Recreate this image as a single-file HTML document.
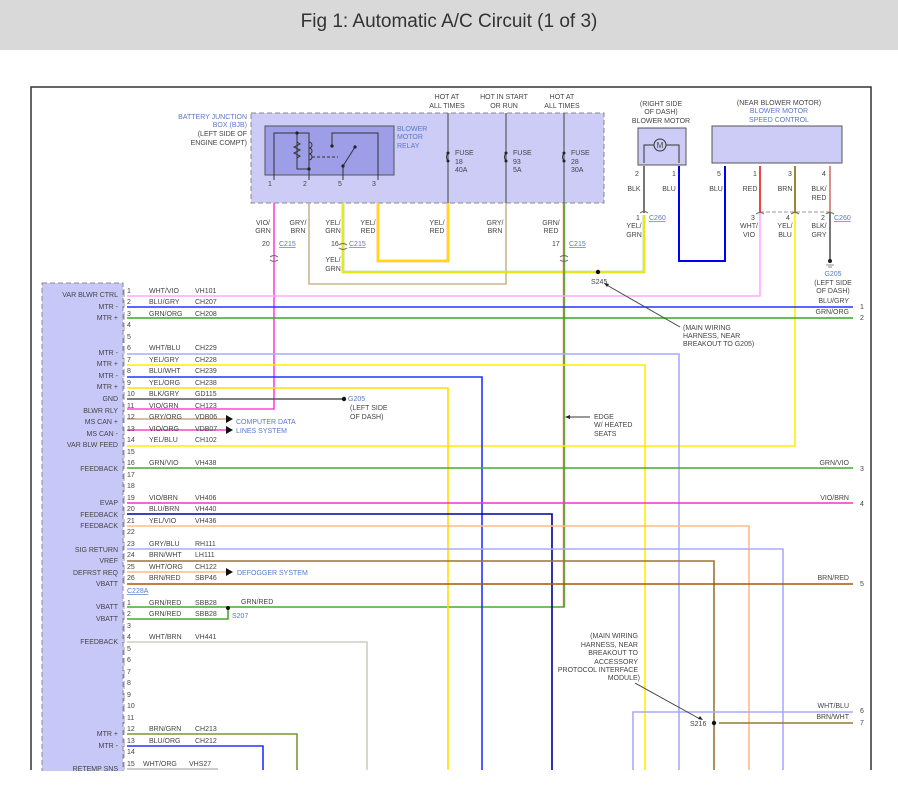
<!DOCTYPE html>
<html><head><meta charset="utf-8"><style>
html,body{margin:0;padding:0;background:#fff;width:898px;height:791px;overflow:hidden}
svg{display:block}
text{font-family:"Liberation Sans",sans-serif;font-size:7px;fill:#444}
.b{fill:#5a78c8}
.r{text-anchor:end}
.m{text-anchor:middle}
</style></head><body>
<svg width="898" height="791" viewBox="0 0 898 791">
<rect x="0" y="0" width="898" height="50" fill="#d9d9d9"/>
<text x="449" y="27" class="m" style="font-size:19px;fill:#333">Fig 1: Automatic A/C Circuit (1 of 3)</text>
<!-- frame -->
<path d="M31 770V87H871V770" fill="none" stroke="#333" stroke-width="1.5"/>

<!-- BJB -->
<rect x="251" y="113" width="353" height="90" fill="#ccccf6" stroke="#888" stroke-dasharray="5,3"/>
<rect x="265" y="126" width="129" height="49" fill="#9d9de8" stroke="#555"/>
<text x="247" y="119" class="r b">BATTERY JUNCTION</text>
<text x="247" y="127" class="r b">BOX (BJB)</text>
<text x="247" y="136" class="r">(LEFT SIDE OF</text>
<text x="247" y="145" class="r">ENGINE COMPT)</text>
<text x="397" y="131" class="b">BLOWER</text><text x="397" y="139" class="b">MOTOR</text><text x="397" y="148" class="b">RELAY</text>
<g stroke="#333" fill="none" stroke-width="1">
<path d="M274 180V133H297V169H309V180M297 133H309V169"/>
<path d="M297 142l3 2-6 3 6 3-6 3 6 3-3 2"/>
<path d="M309 142a2 2 0 0 1 0 6a2 2 0 0 1 0 6a2 2 0 0 1 0 6"/>
<path d="M312 157H338" stroke-dasharray="3,2"/>
<path d="M332 146V133H378V180M343 180V166L355 147"/>
</g>
<g fill="#222"><circle cx="297" cy="133" r="1.6"/><circle cx="309" cy="169" r="1.6"/><circle cx="332" cy="146" r="1.6"/><circle cx="343" cy="166" r="1.6"/><circle cx="355" cy="147" r="1.6"/></g>
<text x="268" y="186">1</text><text x="303" y="186">2</text><text x="338" y="186">5</text><text x="372" y="186">3</text>
<!-- fuses -->
<g stroke="#444" fill="none"><path d="M448 113V203M506 113V203M564 113V203"/></g>
<g stroke="#333" fill="none"><path d="M448 153q-3 4 0 8M506 153q-3 4 0 8M564 153q-3 4 0 8"/></g>
<g fill="#222"><circle cx="448" cy="153" r="1.5"/><circle cx="448" cy="161" r="1.5"/><circle cx="506" cy="153" r="1.5"/><circle cx="506" cy="161" r="1.5"/><circle cx="564" cy="153" r="1.5"/><circle cx="564" cy="161" r="1.5"/></g>
<text x="455" y="155">FUSE</text><text x="455" y="164">18</text><text x="455" y="172">40A</text>
<text x="513" y="155">FUSE</text><text x="513" y="164">93</text><text x="513" y="172">5A</text>
<text x="571" y="155">FUSE</text><text x="571" y="164">28</text><text x="571" y="172">30A</text>
<text x="447" y="99" class="m">HOT AT</text><text x="447" y="108" class="m">ALL TIMES</text>
<text x="504" y="99" class="m">HOT IN START</text><text x="504" y="108" class="m">OR RUN</text>
<text x="562" y="99" class="m">HOT AT</text><text x="562" y="108" class="m">ALL TIMES</text>

<!-- blower motor -->
<text x="661" y="106" class="m">(RIGHT SIDE</text><text x="661" y="114" class="m">OF DASH)</text><text x="661" y="123" class="m">BLOWER MOTOR</text>
<rect x="638" y="128" width="48" height="37" fill="#ccccf6" stroke="#555"/>
<circle cx="660" cy="145" r="6" fill="#ccccf6" stroke="#333"/><text x="660" y="148" class="m" style="font-size:8px">M</text>
<path d="M654 145H644V163M666 145H679V163" stroke="#333" fill="none"/>
<text x="635" y="176">2</text><text x="672" y="176">1</text>
<!-- speed control -->
<text x="779" y="105" class="m">(NEAR BLOWER MOTOR)</text>
<text x="779" y="113" class="m b">BLOWER MOTOR</text><text x="779" y="122" class="m b">SPEED CONTROL</text>
<rect x="712" y="126" width="130" height="37" fill="#ccccf6" stroke="#555"/>
<text x="717" y="176">5</text><text x="753" y="176">1</text><text x="788" y="176">3</text><text x="822" y="176">4</text>
<path d="M760 212H830" stroke="#999" stroke-dasharray="4,2"/>

<!-- top wires -->
<g fill="none" stroke-width="1.6">
<path d="M274 203V409H127" stroke="#ff44dd"/>
<path d="M309 203V284H506V203" stroke="#c8b890"/>
<path d="M343 203V272H644V215" stroke="#9ccc66" stroke-width="2.6"/>
<path d="M343 203V272H644V215" stroke="#ffee00"/>
<path d="M378 203V261H448V203" stroke="#ff9933" stroke-width="2.6"/>
<path d="M378 203V261H448V203" stroke="#ffee00"/>
<path d="M564 203V607" stroke="#ff9977" stroke-width="2.6"/>
<path d="M564 203V607H127" stroke="#44aa33"/>
<path d="M644 166V213" stroke="#555"/>
<path d="M679 166V261H725V166" stroke="#0000ee" stroke-width="2"/>
<path d="M760 166V212" stroke="#ee1111"/>
<path d="M795 166V212" stroke="#998833" stroke-width="2"/>
<path d="M830 166V212" stroke="#cc7766"/>
<path d="M830 212V260" stroke="#555"/>
<path d="M760 212V296H127" stroke="#ffaaff"/>
<path d="M795 212V446H127" stroke="#ffee00"/>
<path d="M127 307H853" stroke="#2233ff"/>
<path d="M127 318H853" stroke="#33aa22"/>
<path d="M127 354H679V770" stroke="#aaaaff"/>
<path d="M127 365H645V770" stroke="#ffee00"/>
<path d="M127 377H482V770" stroke="#2233ff"/>
<path d="M127 388H448V770" stroke="#ffdd00"/>
<path d="M127 399H343" stroke="#555"/>
<path d="M127 419H226" stroke="#c8a888"/>
<path d="M127 430H226" stroke="#ff44cc"/>
<path d="M127 468H853" stroke="#44aa33"/>
<path d="M127 503H853" stroke="#ee33cc"/>
<path d="M127 514H552V770" stroke="#000099"/>
<path d="M127 526H749V770" stroke="#ffbb88"/>
<path d="M127 549H783V770" stroke="#aaaaff"/>
<path d="M127 561H714V770" stroke="#997733"/>
<path d="M127 572H226" stroke="#ffbb88"/>
<path d="M127 584H853" stroke="#aa5500"/>
<path d="M127 619H228V608" stroke="#44aa33"/>
<path d="M127 642H367V770" stroke="#cfcfc4"/>
<path d="M127 734H297V770" stroke="#779933"/>
<path d="M127 746H263V770" stroke="#2233ff"/>
<path d="M127 769H218" stroke="#bbb"/>
<path d="M633 770V712H853" stroke="#aaaaff"/>
<path d="M719 723H853" stroke="#997733"/>
</g>
<!-- connectors -->
<g stroke="#666" fill="none">
<path d="M270 257q4 -3 8 0M270 260q4 3 8 0M339 245q4 -3 8 0M339 248q4 3 8 0M560 257q4 -3 8 0M560 260q4 3 8 0M640 213q4 -3 8 0M756 214q4 -3 8 0M791 214q4 -3 8 0M826 214q4 -3 8 0"/>
</g>
<g class="m">
<text x="263" y="225" class="m">VIO/</text><text x="263" y="233" class="m">GRN</text>
<text x="298" y="225" class="m">GRY/</text><text x="298" y="233" class="m">BRN</text>
<text x="333" y="225" class="m">YEL/</text><text x="333" y="233" class="m">GRN</text>
<text x="368" y="225" class="m">YEL/</text><text x="368" y="233" class="m">RED</text>
<text x="437" y="225" class="m">YEL/</text><text x="437" y="233" class="m">RED</text>
<text x="495" y="225" class="m">GRY/</text><text x="495" y="233" class="m">BRN</text>
<text x="551" y="225" class="m">GRN/</text><text x="551" y="233" class="m">RED</text>
<text x="333" y="262" class="m">YEL/</text><text x="333" y="271" class="m">GRN</text>
<text x="634" y="191" class="m">BLK</text><text x="669" y="191" class="m">BLU</text>
<text x="716" y="191" class="m">BLU</text><text x="750" y="191" class="m">RED</text><text x="785" y="191" class="m">BRN</text>
<text x="819" y="191" class="m">BLK/</text><text x="819" y="200" class="m">RED</text>
<text x="634" y="228" class="m">YEL/</text><text x="634" y="237" class="m">GRN</text>
<text x="749" y="228" class="m">WHT/</text><text x="749" y="237" class="m">VIO</text>
<text x="785" y="228" class="m">YEL/</text><text x="785" y="237" class="m">BLU</text>
<text x="819" y="228" class="m">BLK/</text><text x="819" y="237" class="m">GRY</text>
</g>
<text x="262" y="246">20</text><text x="279" y="246" class="b" text-decoration="underline">C215</text>
<text x="331" y="246">16</text><text x="349" y="246" class="b" text-decoration="underline">C215</text>
<text x="552" y="246">17</text><text x="569" y="246" class="b" text-decoration="underline">C215</text>
<text x="636" y="220">1</text><text x="649" y="220" class="b" text-decoration="underline">C260</text>
<text x="751" y="220">3</text><text x="786" y="220">4</text>
<text x="821" y="220">2</text><text x="834" y="220" class="b" text-decoration="underline">C260</text>
<circle cx="830" cy="261" r="2" fill="#222"/><path d="M826 265h8M828 267h4" stroke="#888"/>
<text x="833" y="276" class="m b">G205</text><text x="833" y="285" class="m">(LEFT SIDE</text><text x="833" y="293" class="m">OF DASH)</text>
<circle cx="598" cy="272" r="2.2" fill="#111"/><text x="591" y="284">S245</text>
<path d="M605 284L680 327" stroke="#444"/><path d="M604 283l5 1-2 3z" fill="#222"/>
<text x="683" y="330">(MAIN WIRING</text><text x="683" y="338">HARNESS, NEAR</text><text x="683" y="346">BREAKOUT TO G205)</text>

<!-- module -->
<rect x="42" y="283" width="81" height="500" fill="#c8c8f8" stroke="#888" stroke-dasharray="5,3"/>
<g class="r">
<text x="118" y="297" class="r">VAR BLWR CTRL</text>
<text x="118" y="309" class="r">MTR -</text>
<text x="118" y="320" class="r">MTR +</text>
<text x="118" y="355" class="r">MTR -</text>
<text x="118" y="366" class="r">MTR +</text>
<text x="118" y="378" class="r">MTR -</text>
<text x="118" y="389" class="r">MTR +</text>
<text x="118" y="401" class="r">GND</text>
<text x="118" y="413" class="r">BLWR RLY</text>
<text x="118" y="424" class="r">MS CAN +</text>
<text x="118" y="436" class="r">MS CAN -</text>
<text x="118" y="447" class="r">VAR BLW FEED</text>
<text x="118" y="471" class="r">FEEDBACK</text>
<text x="118" y="505" class="r">EVAP</text>
<text x="118" y="517" class="r">FEEDBACK</text>
<text x="118" y="528" class="r">FEEDBACK</text>
<text x="118" y="552" class="r">SIG RETURN</text>
<text x="118" y="563" class="r">VREF</text>
<text x="118" y="575" class="r">DEFRST REQ</text>
<text x="118" y="586" class="r">VBATT</text>
<text x="118" y="609" class="r">VBATT</text>
<text x="118" y="621" class="r">VBATT</text>
<text x="118" y="644" class="r">FEEDBACK</text>
<text x="118" y="736" class="r">MTR +</text>
<text x="118" y="748" class="r">MTR -</text>
<text x="118" y="771" class="r">RETEMP SNS</text>
</g>
<g stroke="#777" fill="none" stroke-width="0.8">
<path d="M124 289v8M124 300v8M124 312v8M124 323v8M124 335v8M124 346v8M124 358v8M124 369v8M124 381v8M124 392v8M124 404v8M124 415v8M124 427v8M124 438v8M124 450v8M124 461v8M124 473v8M124 484v8M124 496v8M124 507v8M124 519v8M124 530v8M124 542v8M124 553v8M124 565v8M124 576v8M124 601v8M124 612v8M124 624v8M124 635v8M124 647v8M124 658v8M124 670v8M124 681v8M124 693v8M124 704v8M124 716v8M124 727v8M124 739v8M124 750v8M124 762v8"/>
</g>
<g>
<text x="127" y="293">1</text><text x="127" y="304">2</text><text x="127" y="316">3</text><text x="127" y="327">4</text><text x="127" y="339">5</text>
<text x="127" y="350">6</text><text x="127" y="362">7</text><text x="127" y="373">8</text><text x="127" y="385">9</text><text x="127" y="396">10</text>
<text x="127" y="408">11</text><text x="127" y="419">12</text><text x="127" y="431">13</text><text x="127" y="442">14</text><text x="127" y="454">15</text>
<text x="127" y="465">16</text><text x="127" y="477">17</text><text x="127" y="488">18</text><text x="127" y="500">19</text><text x="127" y="511">20</text>
<text x="127" y="523">21</text><text x="127" y="534">22</text><text x="127" y="546">23</text><text x="127" y="557">24</text><text x="127" y="569">25</text>
<text x="127" y="580">26</text>
<text x="127" y="593" class="b" text-decoration="underline">C228A</text>
<text x="127" y="605">1</text><text x="127" y="616">2</text><text x="127" y="628">3</text><text x="127" y="639">4</text><text x="127" y="651">5</text>
<text x="127" y="662">6</text><text x="127" y="674">7</text><text x="127" y="685">8</text><text x="127" y="697">9</text><text x="127" y="708">10</text>
<text x="127" y="720">11</text><text x="127" y="731">12</text><text x="127" y="743">13</text><text x="127" y="754">14</text><text x="127" y="766">15</text>
</g>
<g>
<text x="149" y="293">WHT/VIO</text><text x="195" y="293">VH101</text>
<text x="149" y="304">BLU/GRY</text><text x="195" y="304">CH207</text>
<text x="149" y="316">GRN/ORG</text><text x="195" y="316">CH208</text>
<text x="149" y="350">WHT/BLU</text><text x="195" y="350">CH229</text>
<text x="149" y="362">YEL/GRY</text><text x="195" y="362">CH228</text>
<text x="149" y="373">BLU/WHT</text><text x="195" y="373">CH239</text>
<text x="149" y="385">YEL/ORG</text><text x="195" y="385">CH238</text>
<text x="149" y="396">BLK/GRY</text><text x="195" y="396">GD115</text>
<text x="149" y="408">VIO/GRN</text><text x="195" y="408">CH123</text>
<text x="149" y="419">GRY/ORG</text><text x="195" y="419">VDB06</text>
<text x="149" y="431">VIO/ORG</text><text x="195" y="431">VDB07</text>
<text x="149" y="442">YEL/BLU</text><text x="195" y="442">CH102</text>
<text x="149" y="465">GRN/VIO</text><text x="195" y="465">VH438</text>
<text x="149" y="500">VIO/BRN</text><text x="195" y="500">VH406</text>
<text x="149" y="511">BLU/BRN</text><text x="195" y="511">VH440</text>
<text x="149" y="523">YEL/VIO</text><text x="195" y="523">VH436</text>
<text x="149" y="546">GRY/BLU</text><text x="195" y="546">RH111</text>
<text x="149" y="557">BRN/WHT</text><text x="195" y="557">LH111</text>
<text x="149" y="569">WHT/ORG</text><text x="195" y="569">CH122</text>
<text x="149" y="580">BRN/RED</text><text x="195" y="580">SBP46</text>
<text x="149" y="605">GRN/RED</text><text x="195" y="605">SBB28</text>
<text x="149" y="616">GRN/RED</text><text x="195" y="616">SBB28</text>
<text x="149" y="639">WHT/BRN</text><text x="195" y="639">VH441</text>
<text x="149" y="731">BRN/GRN</text><text x="195" y="731">CH213</text>
<text x="149" y="743">BLU/ORG</text><text x="195" y="743">CH212</text>
<text x="143" y="766">WHT/ORG</text><text x="189" y="766">VHS27</text>
</g>
<!-- arrows / splices -->
<g fill="#111">
<path d="M226 415v8l7-4z"/><path d="M226 426v8l7-4z"/><path d="M226 568v8l7-4z"/>
<circle cx="344" cy="399" r="2.2"/><circle cx="228" cy="608" r="2"/><circle cx="714" cy="723" r="2.2"/>
</g>
<text x="236" y="424" class="b">COMPUTER DATA</text><text x="236" y="433" class="b">LINES SYSTEM</text>
<text x="237" y="575" class="b">DEFOGGER SYSTEM</text>
<text x="348" y="401" class="b">G205</text><text x="350" y="410">(LEFT SIDE</text><text x="350" y="419">OF DASH)</text>
<text x="241" y="604">GRN/RED</text><text x="232" y="618" class="b">S207</text>
<path d="M566 417H590" stroke="#333"/><path d="M565 417l5-2v4z" fill="#222"/>
<text x="594" y="419">EDGE</text><text x="594" y="427">W/ HEATED</text><text x="594" y="436">SEATS</text>
<text x="638" y="638" class="r">(MAIN WIRING</text><text x="638" y="647" class="r">HARNESS, NEAR</text><text x="638" y="655" class="r">BREAKOUT TO</text><text x="638" y="664" class="r">ACCESSORY</text><text x="638" y="672" class="r">PROTOCOL INTERFACE</text><text x="640" y="680" class="r">MODULE)</text>
<path d="M635 683L700 719" stroke="#444"/><path d="M703 720l-5 -1 2 -3z" fill="#222"/>
<text x="690" y="726">S216</text>
<!-- right labels -->
<g>
<text x="849" y="303" class="r">BLU/GRY</text><text x="860" y="309">1</text>
<text x="849" y="314" class="r">GRN/ORG</text><text x="860" y="320">2</text>
<text x="849" y="465" class="r">GRN/VIO</text><text x="860" y="471">3</text>
<text x="849" y="500" class="r">VIO/BRN</text><text x="860" y="506">4</text>
<text x="849" y="580" class="r">BRN/RED</text><text x="860" y="586">5</text>
<text x="849" y="708" class="r">WHT/BLU</text><text x="860" y="713">6</text>
<text x="849" y="719" class="r">BRN/WHT</text><text x="860" y="725">7</text>
</g>
<rect x="0" y="771" width="898" height="20" fill="#fff"/>
</svg>
</body></html>
